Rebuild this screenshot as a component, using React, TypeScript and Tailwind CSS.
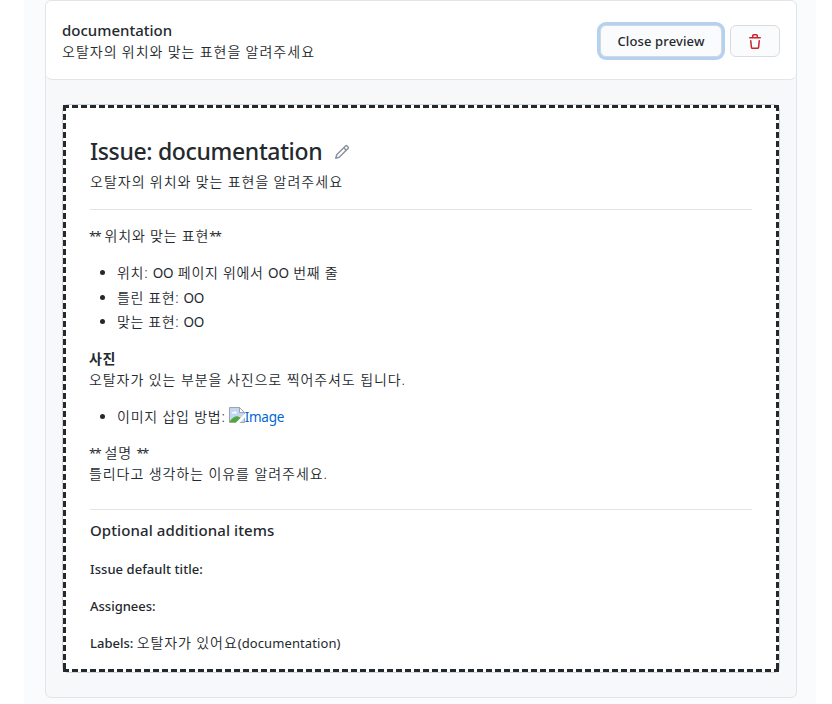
import type { ReactNode } from "react";

function Line({ className = "", children }: { className?: string; children: ReactNode }) {
  return <div className={`h-[21px] whitespace-nowrap text-[14px] leading-[21px] ${className}`}>{children}</div>;
}

function Bullet({ className = "", children }: { className?: string; children: ReactNode }) {
  return (
    <li className={`flex h-[21px] items-center whitespace-nowrap leading-[21px] ${className}`}>
      <span className="ml-[10px] mr-[12px] h-[5px] w-[5px] rounded-full bg-[#24292e]" />
      <span>{children}</span>
    </li>
  );
}

function Stars() {
  return <span className="text-[13px] font-normal tracking-[-1.6px]">**</span>;
}

function Circles() {
  return <span className="text-[13.5px] font-normal tracking-[-0.1px]">OO</span>;
}

function Trash() {
  return (
    <svg width="16" height="16" viewBox="0 0 16 16" fill="#cb2431">
      <path fillRule="evenodd" d="M6.5 1.75a.25.25 0 01.25-.25h2.5a.25.25 0 01.25.25V3h-3V1.75zm4.5 0V3h2.25a.75.75 0 010 1.5H2.75a.75.75 0 010-1.5H5V1.75C5 .784 5.784 0 6.75 0h2.5C10.216 0 11 .784 11 1.75zM4.496 6.675a.75.75 0 10-1.492.15l.66 6.6A1.75 1.75 0 005.405 15h5.19c.9 0 1.652-.681 1.741-1.576l.66-6.6a.75.75 0 00-1.492-.149l-.66 6.6a.25.25 0 01-.249.225h-5.19a.25.25 0 01-.249-.225l-.66-6.6z" />
    </svg>
  );
}

function Pencil() {
  return (
    <svg width="16" height="16" viewBox="0 0 16 16" fill="#8c949c">
      <path fillRule="evenodd" d="M11.013 1.427a1.75 1.75 0 012.474 0l1.086 1.086a1.75 1.75 0 010 2.474l-8.61 8.61c-.21.21-.47.364-.756.445l-3.251.93a.75.75 0 01-.927-.928l.929-3.25a1.75 1.75 0 01.445-.758l8.61-8.61zm1.414 1.06a.25.25 0 00-.354 0L10.811 3.75l1.439 1.44 1.263-1.263a.25.25 0 000-.354l-1.086-1.086zM11.189 6.25L9.75 4.81l-6.286 6.287a.25.25 0 00-.064.108l-.558 1.953 1.953-.558a.249.249 0 00.108-.064l6.286-6.286z" />
    </svg>
  );
}

function BrokenImage() {
  return (
    <svg width="16" height="16" viewBox="0 0 16 16">
      <path d="M.5.5h10l5 5v10H.5z" fill="#c2d6f6" stroke="#a3a3a3" />
      <path d="M2.500 6.500c0-1.500 1.500-2 2.200-1.200C5.500 3.500 8 4.500 7.800 6.500z" fill="#fff" />
      <path d="M1 15v-1c3-4 7-6 9-4l2 1-4 4z" fill="#4fa83d" />
      <path d="M16 6.500L7 15.500V16h3.500L16 10.500z" fill="#fff" />
      <path d="M10.500.5v5h5z" fill="#fff" stroke="#a3a3a3" />
    </svg>
  );
}

export default function App() {
  return (
    <div className="h-[704px] w-[832px] overflow-hidden bg-white pl-6 pr-4 font-['Noto_Sans','Noto_Sans_CJK_KR',sans-serif] text-[14px] text-[#24292e]">
      <main className="h-full bg-[#fafbfc] pl-[21px] pr-[19px]">
        <section className="h-[698px] rounded-md border border-[#e1e4e8] bg-[#f6f8fa]">
          <header className="flex h-[79px] items-start justify-between rounded-md border-b border-[#e1e4e8] bg-white pl-4 pr-4">
            <div className="pt-[18px]">
              <div className="h-[22px] whitespace-nowrap text-[15px] font-medium leading-[22px]">documentation</div>
              <Line className="font-['Noto_Sans_CJK_KR'] font-[350] tracking-[1.03px]">오탈자의 위치와 맞는 표현을 알려주세요</Line>
            </div>
            <div className="flex gap-2 pt-6">
              <button className="h-8 w-[122px] whitespace-nowrap rounded-md border border-[#d5d8da] bg-[#fafbfc] pt-px text-[13px] font-medium tracking-[0.13px] shadow-[0_0_0_3px_#b3d2f3]">Close preview</button>
              <button className="flex h-8 w-[50px] items-center justify-center rounded-md border border-[#d9dbdd] bg-[#fafbfc] pt-0.5"><Trash /></button>
            </div>
          </header>
          <div className="ml-4 mr-4 mt-6 h-[569px] rounded-md border border-[#d1d5da]">
            <article className="relative h-[567px] bg-white px-[27px] pt-[30px]">
              <svg className="absolute inset-0" width="716" height="567" fill="none" stroke="#24292e" strokeWidth="3" strokeDasharray="6 3">
                <path d="M0 1.500H716M1.500 0V567M714.500 0V567M0 565.500H716" />
              </svg>
              <div className="flex h-8 items-center">
                <h1 className="whitespace-nowrap text-[23px] font-medium leading-8 tracking-[-0.35px]">Issue: documentation</h1>
                <span className="ml-[12px] pt-0.5"><Pencil /></span>
              </div>
              <Line className="mt-[4px] font-['Noto_Sans_CJK_KR'] font-[350] tracking-[1.03px]">오탈자의 위치와 맞는 표현을 알려주세요</Line>
              <hr className="mt-[17px] border-[#e1e4e8]" />
              <div className="mt-[15px] font-[350]">
                <Line className="-ml-px tracking-[0.8px]"><Stars /> 위치와 맞는 표현<Stars /></Line>
                <ul className="mt-4">
                  <Bullet><span className="tracking-[0.7px]">위치: <Circles /> 페이지 위에서 <Circles /> 번째 줄</span></Bullet>
                  <Bullet className="mt-1"><span className="tracking-[0.6px]">틀린 표현: <Circles /></span></Bullet>
                  <Bullet className="mt-[3px]"><span className="tracking-[0.6px]">맞는 표현: <Circles /></span></Bullet>
                </ul>
                <Line className="-ml-px mt-4 font-semibold tracking-[0.6px]">사진</Line>
                <Line className="-ml-px tracking-[0.92px]">오탈자가 있는 부분을 사진으로 찍어주셔도 됩니다.</Line>
                <ul className="mt-4">
                  <Bullet>
                    <span className="flex items-center"><span className="tracking-[0.78px]">이미지 삽입 방법:</span><span className="mb-1 ml-[3px]"><BrokenImage /></span><span className="pt-px text-[13.5px] font-normal tracking-[-0.25px] text-[#0366d6]">Image</span></span>
                  </Bullet>
                </ul>
                <Line className="-ml-px mt-[15px] tracking-[0.8px]"><Stars /> 설명 <Stars /></Line>
                <Line className="-ml-px tracking-[0.92px]">틀리다고 생각하는 이유를 알려주세요.</Line>
              </div>
              <hr className="mt-[25px] border-[#e1e4e8]" />
              <div className="mt-[8px] h-6 whitespace-nowrap text-[15px] font-medium leading-6 tracking-[0.1px]">Optional additional items</div>
              <div className="mt-[17px] h-[21px] whitespace-nowrap text-[13px] font-medium leading-[21px] tracking-[0.05px]">Issue default title:</div>
              <div className="mt-4 h-[21px] whitespace-nowrap text-[13px] font-medium leading-[21px]">Assignees:</div>
              <div className="mt-[15px] h-[21px] whitespace-nowrap text-[13px] font-medium leading-[21px]">Labels: <span className="text-[14px] font-[350] tracking-[0.9px]">오탈자가 있어요<span className="text-[13px] font-normal tracking-[0.1px]">(documentation)</span></span></div>
            </article>
          </div>
        </section>
      </main>
    </div>
  );
}
